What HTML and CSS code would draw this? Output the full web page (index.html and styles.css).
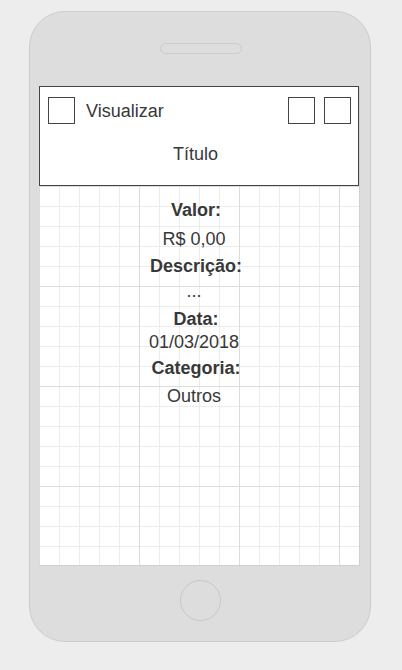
FILE: index.html
```html
<!DOCTYPE html>
<html lang="pt-BR">
<head>
<meta charset="utf-8">
<title>Visualizar</title>
<link rel="stylesheet" href="styles.css">
</head>
<body>
<div class="phone">
  <div class="speaker"></div>
  <div class="screen">
    <header class="appbar">
      <div class="appbar-row">
        <span class="box"></span>
        <span class="appbar-title">Visualizar</span>
        <span class="spacer"></span>
        <span class="box"></span>
        <span class="box"></span>
      </div>
      <div class="appbar-sub">Título</div>
    </header>
    <main class="details">
      <div class="label l-first">Valor:</div>
      <div class="value v-1">R$ 0,00</div>
      <div class="label l-2">Descrição:</div>
      <div class="value v-2">...</div>
      <div class="label l-3">Data:</div>
      <div class="value v-3">01/03/2018</div>
      <div class="label l-4">Categoria:</div>
      <div class="value v-4">Outros</div>
    </main>
  </div>
  <div class="home"></div>
</div>
</body>
</html>
```
FILE: styles.css
```css
* { box-sizing: border-box; }
html, body { margin: 0; padding: 0; }
body {
  background: #ededed;
  font-family: "Liberation Sans", Arial, sans-serif;
  color: #383838;
  width: 402px;
  height: 670px;
  overflow: hidden;
}
.phone {
  margin: 11px 0 0 29px;
  width: 342px;
  height: 631px;
  background: #dddddd;
  border: 1px solid #cbcbcb;
  border-radius: 36px;
  display: flex;
  flex-direction: column;
}
.speaker {
  margin: 31px 0 0 130px;
  width: 82px;
  height: 11px;
  border: 1px solid #cbcbcb;
  border-radius: 6px;
}
.screen {
  margin: 32px 0 0 9px;
  width: 320px;
  height: 480px;
  background-color: #fff;
  background-image:
    linear-gradient(to right, #dcdcdc 1px, transparent 1px),
    linear-gradient(to bottom, #dcdcdc 1px, transparent 1px),
    linear-gradient(to right, #ececec 1px, transparent 1px),
    linear-gradient(to bottom, #ececec 1px, transparent 1px);
  background-size: 100px 100px, 100px 100px, 20px 20px, 20px 20px;
  box-shadow: 1px 0 0 #d0d0d0;
  border-bottom: 1px solid #cfcfcf;
  display: flex;
  flex-direction: column;
}
.appbar {
  height: 100px;
  background: #fff;
  border: 1px solid #444;
  padding: 10px 7px 0 8px;
  display: flex;
  flex-direction: column;
}
.appbar-row {
  display: flex;
  align-items: center;
  height: 27px;
  gap: 9px;
}
.box {
  width: 27px;
  height: 27px;
  border: 1px solid #444;
  flex: none;
}
.appbar-title {
  font-size: 18px;
  line-height: 27px;
  margin-left: 2px;
  padding-top: 2px;
}
.spacer { flex: 1; }
.appbar-sub {
  margin-top: 19px;
  font-size: 18px;
  line-height: 23px;
  text-align: center;
  padding-right: 8px;
}
.details {
  display: flex;
  flex-direction: column;
  align-items: center;
  padding-right: 8px;
  font-size: 18px;
  line-height: 23px;
}
.label { font-weight: bold; margin-left: 2px; }
.value { margin-right: 2px; }
.l-first { margin-top: 13px; }
.v-1 { margin-top: 6px; }
.l-2 { margin-top: 4px; }
.v-2 { margin-top: 2px; }
.l-3 { margin-top: 5px; }
.v-3 { margin-top: 0; }
.l-4 { margin-top: 3px; }
.v-4 { margin-top: 5px; }
.home {
  margin: 14px auto 0;
  width: 41px;
  height: 41px;
  border: 1px solid #c8c8c8;
  border-radius: 50%;
}
```
